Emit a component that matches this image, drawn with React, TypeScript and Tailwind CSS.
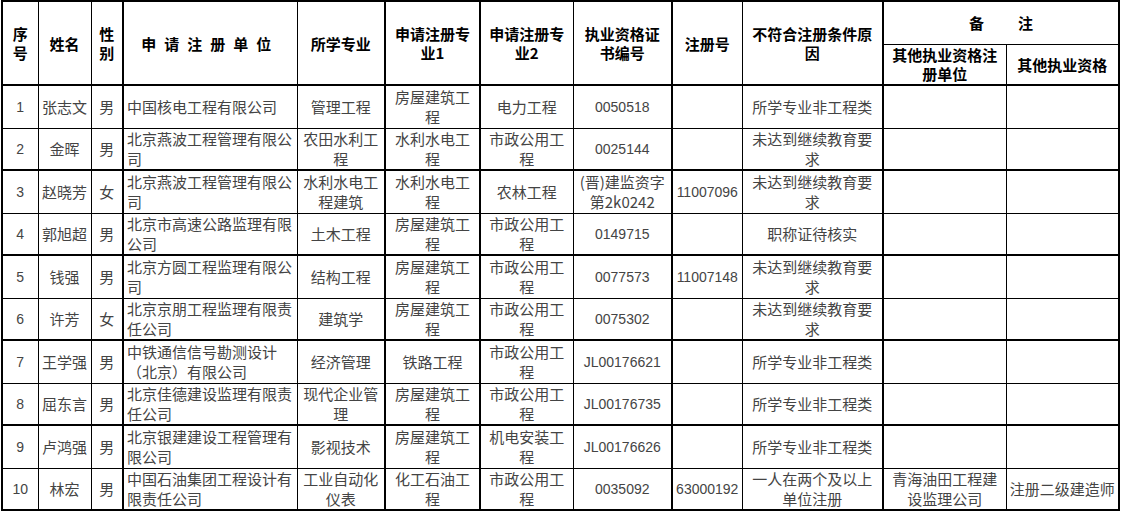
import React from "react";

type Row = {
  no: string;
  name: string;
  sex: string;
  unit: string[];
  major: string;
  reg1: string;
  reg2: string;
  cert: string;
  regNo: string;
  reason: string;
  otherUnit: string;
  otherCert: string;
};

const rows: Row[] = [
  { no: "1", name: "张志文", sex: "男", unit: ["中国核电工程有限公司"], major: "管理工程", reg1: "房屋建筑工程", reg2: "电力工程", cert: "0050518", regNo: "", reason: "所学专业非工程类", otherUnit: "", otherCert: "" },
  { no: "2", name: "金晖", sex: "男", unit: ["北京燕波工程管理有限公", "司"], major: "农田水利工程", reg1: "水利水电工程", reg2: "市政公用工程", cert: "0025144", regNo: "", reason: "未达到继续教育要求", otherUnit: "", otherCert: "" },
  { no: "3", name: "赵晓芳", sex: "女", unit: ["北京燕波工程管理有限公", "司"], major: "水利水电工程建筑", reg1: "水利水电工程", reg2: "农林工程", cert: "(晋)建监资字第2k0242", regNo: "11007096", reason: "未达到继续教育要求", otherUnit: "", otherCert: "" },
  { no: "4", name: "郭旭超", sex: "男", unit: ["北京市高速公路监理有限", "公司"], major: "土木工程", reg1: "房屋建筑工程", reg2: "市政公用工程", cert: "0149715", regNo: "", reason: "职称证待核实", otherUnit: "", otherCert: "" },
  { no: "5", name: "钱强", sex: "男", unit: ["北京方圆工程监理有限公", "司"], major: "结构工程", reg1: "房屋建筑工程", reg2: "市政公用工程", cert: "0077573", regNo: "11007148", reason: "未达到继续教育要求", otherUnit: "", otherCert: "" },
  { no: "6", name: "许芳", sex: "女", unit: ["北京京朋工程监理有限责", "任公司"], major: "建筑学", reg1: "房屋建筑工程", reg2: "市政公用工程", cert: "0075302", regNo: "", reason: "未达到继续教育要求", otherUnit: "", otherCert: "" },
  { no: "7", name: "王学强", sex: "男", unit: ["中铁通信信号勘测设计", "（北京）有限公司"], major: "经济管理", reg1: "铁路工程", reg2: "市政公用工程", cert: "JL00176621", regNo: "", reason: "所学专业非工程类", otherUnit: "", otherCert: "" },
  { no: "8", name: "屈东言", sex: "男", unit: ["北京佳德建设监理有限责", "任公司"], major: "现代企业管理", reg1: "房屋建筑工程", reg2: "市政公用工程", cert: "JL00176735", regNo: "", reason: "所学专业非工程类", otherUnit: "", otherCert: "" },
  { no: "9", name: "卢鸿强", sex: "男", unit: ["北京银建建设工程管理有", "限公司"], major: "影视技术", reg1: "房屋建筑工程", reg2: "机电安装工程", cert: "JL00176626", regNo: "", reason: "所学专业非工程类", otherUnit: "", otherCert: "" },
  { no: "10", name: "林宏", sex: "男", unit: ["中国石油集团工程设计有", "限责任公司"], major: "工业自动化仪表", reg1: "化工石油工程", reg2: "市政公用工程", cert: "0035092", regNo: "63000192", reason: "一人在两个及以上单位注册", otherUnit: "青海油田工程建设监理公司", otherCert: "注册二级建造师" },
];

const sans = "font-['Noto_Sans_CJK_SC',sans-serif]";
const num = "font-['Liberation_Sans','Noto_Sans_CJK_SC',sans-serif] text-[14px]";

export default function App() {
  return (
    <div className="w-[1121px] h-[511px] bg-white overflow-hidden">
      <table className={`table-fixed border-collapse border-2 border-black ml-px ${sans} text-[15px] leading-[20px]`}>
        <colgroup>
          <col className="w-[36px]" />
          <col className="w-[53px]" />
          <col className="w-[32px]" />
          <col className="w-[174px]" />
          <col className="w-[88px]" />
          <col className="w-[95px]" />
          <col className="w-[93px]" />
          <col className="w-[99px]" />
          <col className="w-[70px]" />
          <col className="w-[141px]" />
          <col className="w-[123px]" />
          <col className="w-[113px]" />
        </colgroup>
        <thead className="font-bold text-black leading-[19px]">
          <tr className="h-[43px]">
            <th rowSpan={2} className="border border-black px-1 font-bold">序<br />号</th>
            <th rowSpan={2} className="border border-black px-0 font-bold">姓名</th>
            <th rowSpan={2} className="border border-black border-r-2 px-1 font-bold">性<br />别</th>
            <th rowSpan={2} className="border border-black px-1 font-bold tracking-[8px]">申请注册单位</th>
            <th rowSpan={2} className="border border-black border-r-2 px-1 font-bold">所学专业</th>
            <th rowSpan={2} className="border border-black border-r-2 px-1 font-bold">申请注册专业1</th>
            <th rowSpan={2} className="border border-black px-1 font-bold">申请注册专业2</th>
            <th rowSpan={2} className="border border-black border-r-2 px-[6px] font-bold">执业资格证书编号</th>
            <th rowSpan={2} className="border border-black px-1 font-bold">注册号</th>
            <th rowSpan={2} className="border border-black border-r-2 px-1 font-bold">不符合注册条件原因</th>
            <th colSpan={2} className="border border-black px-1 font-bold">
              <div className="flex justify-center gap-[34px]">
                <span>备</span>
                <span>注</span>
              </div>
            </th>
          </tr>
          <tr className="h-[41px] border-b-2 border-black">
            <th className="border border-black border-b-2 px-1 font-bold">其他执业资格注册单位</th>
            <th className="border border-black border-b-2 px-[3px] font-bold">其他执业资格</th>
          </tr>
        </thead>
        <tbody className="text-[#444]">
          {rows.map((r, i) => (
            <tr
              key={r.no}
              className={`${i % 2 === 0 ? "h-[43px]" : "h-[42px]"} ${i % 2 === 1 ? "border-b-2" : "border-b"} border-black`}
            >
              <td className={`border-x border-black text-center px-1 ${num}`}>{r.no}</td>
              <td className="border-x border-black text-center px-0 whitespace-nowrap">{r.name}</td>
              <td className="border-l border-r-2 border-black text-center px-1">{r.sex}</td>
              <td className="border-x border-black text-left pl-[3px] pr-0 whitespace-nowrap">
                {r.unit.map((line, k) => (
                  <div key={k}>{line}</div>
                ))}
              </td>
              <td className="border-l border-r-2 border-black text-center px-1">{r.major}</td>
              <td className="border-l border-r-2 border-black text-center px-1">{r.reg1}</td>
              <td className="border-x border-black text-center px-1">{r.reg2}</td>
              <td className={`border-l border-r-2 border-black text-center px-[6px] ${r.cert.startsWith("(") ? "" : num}`}>{r.cert}</td>
              <td className={`border-x border-black text-center px-px ${num}`}>{r.regNo}</td>
              <td className="border-l border-r-2 border-black text-center px-1">{r.reason}</td>
              <td className="border-x border-black text-center px-1">{r.otherUnit}</td>
              <td className="border-x border-black text-center px-[3px]">{r.otherCert}</td>
            </tr>
          ))}
        </tbody>
      </table>
    </div>
  );
}
